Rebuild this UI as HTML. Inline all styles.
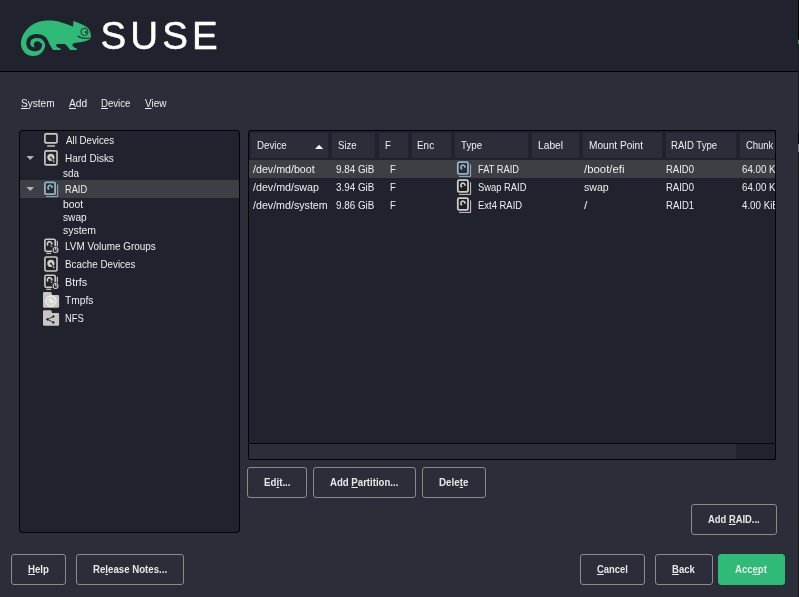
<!DOCTYPE html>
<html lang="en">
<head>
<meta charset="utf-8">
<title>YaST Partitioner - RAID</title>
<style>
html,body{margin:0;padding:0}
body{width:799px;height:597px;overflow:hidden;background:#2b2d38;position:relative;font:11px/13px 'Liberation Sans',sans-serif;color:#efefef}
.abs{position:absolute}
#hdr{left:0;top:0;width:799px;height:71px;background:#20232d}
#hline{left:0;top:71px;width:799px;height:1px;background:#000}
#edge{left:798px;top:0;width:1px;height:597px;background:#1b1b1e}
#edge i{position:absolute;left:0;width:1px;display:block}
.panel{background:#20232d;border:1px solid #030305;border-radius:3px;box-sizing:border-box}
#tree{left:19px;top:130px;width:221px;height:403px}
#tbl{left:248px;top:130px;width:528px;height:330px;overflow:hidden;border-radius:3px 0 0 2px}
.sel{background:#3e3f44}
.hc{position:absolute;top:2px;height:25px;background:#2b2d38}
.t{position:absolute;white-space:nowrap;transform-origin:0 0;color:#efefef;font:11px/13px 'Liberation Sans',sans-serif}
.t.b{font-weight:bold;color:#e8e8e8}
.btn{position:absolute;box-sizing:border-box;height:31px;border:1px solid #8d8a88;border-radius:3px;background:#2b2d38}
.btn.ok{background:#30ba78;border-color:#30ba78}
svg{position:absolute;left:0;top:0;overflow:visible}
</style>
</head>
<body>
<div id="hdr" class="abs"></div>
<div id="hline" class="abs"></div>

<!-- logo -->
<svg width="240" height="71" viewBox="0 0 240 71" style="will-change:transform">
  <g fill="#30ba78">
    <path d="M21.0,43.8 C21.0,38 23.6,32.3 28.6,27.7 C32.6,23.9 39,20.6 47,20.5 C55,20.2 63,22.1 73,26.8 L73.5,21.1 C79,23.2 84.5,25.5 88,28.1 C90,30 91,34 91,37 C91,38.5 90.5,39 89.9,39.3 C87,41.3 82,42.4 75.9,42.7 C74,42.8 73,43.4 72.6,44.2 C72.2,45.5 73,46.6 74,47.2 L76.5,48.4 L77.2,50 L70.2,50 C69,48.5 67.5,46.5 66.4,45.3 C65.5,44.4 65,44 64.4,44 L57.5,44 C56.5,44 56,44.5 56.2,45.2 C56.4,46 56.8,46.8 57.3,47.2 L60.3,48.4 L60.9,50 L53,50 C51,48 49.5,45.5 47.9,41.7 L33,44 Z"/>
    <circle cx="33.2" cy="43.8" r="12.2"/>
  </g>
  <path d="M50.8,50.5 C49.6,48.2 48.4,46.4 47.4,44.6 C46.7,43 46.4,42 45.6,40.6 C45,39.6 44.3,38.8 43.5,38 C42.5,37.2 41.4,36.7 40.1,36.4 C38.5,36 37,35.9 35.6,36.0 C34,36.2 32.5,36.6 31.1,37.5 C29.8,38.4 29,39.6 28.55,41.1 C28.2,42 28.2,43 28.3,44.1 C28.5,45.4 29,46.4 29.8,47.3 C30.7,48.3 31.8,48.8 33.1,49.1 C34.3,49.3 35.5,49.3 36.6,49.1 C37.8,48.8 38.8,48.2 39.4,47.3 C39.9,46.6 40.1,45.9 40.1,45.1" fill="none" stroke="#20232d" stroke-width="4" stroke-linecap="round"/>
  <circle cx="37.4" cy="44.7" r="3.5" fill="#20232d"/>
  <circle cx="84.5" cy="31.9" r="3.6" fill="none" stroke="#20232d" stroke-width="0.9"/>
  <circle cx="86.0" cy="32.2" r="1.1" fill="#20232d"/>
  <path d="M78.1,36.2 Q81.5,38.9 90.3,38" fill="none" stroke="#20232d" stroke-width="1.1" stroke-linecap="round"/>
  <text transform="scale(0.975,1)" x="103.1 133.6 166.45 197.0" y="49.4" font-family="'Liberation Sans', sans-serif" font-size="39.5" fill="#ffffff" stroke="#ffffff" stroke-width="0.5" stroke-linejoin="round">SUSE</text>
</svg>

<!-- tree panel -->
<div id="tree" class="abs panel">
  <div class="abs sel" style="left:0;top:49px;width:219px;height:18px"></div>
</div>

<!-- table panel -->
<div id="tbl" class="abs panel">
  <div class="hc" style="left:2px;width:77px"></div>
  <div class="hc" style="left:83px;width:43px"></div>
  <div class="hc" style="left:130px;width:29px"></div>
  <div class="hc" style="left:163px;width:39px"></div>
  <div class="hc" style="left:206px;width:73px"></div>
  <div class="hc" style="left:283px;width:47px"></div>
  <div class="hc" style="left:334px;width:79px"></div>
  <div class="hc" style="left:417px;width:70px"></div>
  <div class="hc" style="left:491px;width:40px"></div>
  <div class="abs sel" style="left:0;top:29px;width:526px;height:18px"></div>
  <div class="abs" style="left:0;top:312px;width:526px;height:1px;background:#07080b"></div>
  <div class="abs" style="left:0;top:313px;width:487px;height:15px;background:#2b2d38"></div>
</div>

<!-- icons -->
<svg width="799" height="597" viewBox="0 0 799 597">
  <g color="#cfcac3">
    <!-- All devices: monitor -->
    <rect x="44.9" y="133.9" width="12.1" height="9" rx="1" fill="none" stroke="currentColor" stroke-width="1.6"/>
    <rect x="47.2" y="145.3" width="7.8" height="1.4" fill="currentColor"/>
    <g transform="translate(44.1,150.1)"><rect x="0.8" y="0.8" width="12.1" height="14" rx="1.4" fill="none" stroke="currentColor" stroke-width="1.6"/>
      <circle cx="6.8" cy="7.2" r="3.6" fill="currentColor"/>
      <circle cx="6.8" cy="7.2" r="0.9" fill="#20232d"/>
      <path d="M6.8,7.2 L9.3,10.6" stroke="#20232d" stroke-width="1.2"/>
      <path d="M9.2,10.5 L10.1,12" stroke="currentColor" stroke-width="1.3"/></g>
    <g transform="translate(44.1,238.4)"><rect x="0.8" y="0.8" width="10.3" height="12" rx="1.4" fill="none" stroke="currentColor" stroke-width="1.6"/>
      <path d="M13.2,2.4 V9.2" fill="none" stroke="currentColor" stroke-width="1.2"/>
      <path d="M2.2,14.9 H7.1" fill="none" stroke="currentColor" stroke-width="1.2"/>
      <path d="M3.9,7.3 A2.3,2.3 0 1 1 7.7,6.2" fill="none" stroke="currentColor" stroke-width="1.7"/>
      <path d="M6.6,6.9 L8.1,8.9" stroke="currentColor" stroke-width="1"/>
      <circle cx="11.45" cy="11.6" r="3.7" fill="#20232d"/>
      <circle cx="11.45" cy="11.6" r="2.45" fill="none" stroke="currentColor" stroke-width="1.1"/>
      <path d="M11.45,9.6 V11.6 H13.3" fill="none" stroke="currentColor" stroke-width="0.9"/></g>
    <g transform="translate(44.1,256.2)"><rect x="0.8" y="0.8" width="12.1" height="14" rx="1.4" fill="none" stroke="currentColor" stroke-width="1.6"/>
      <circle cx="6.8" cy="7.2" r="3.6" fill="currentColor"/>
      <circle cx="6.8" cy="7.2" r="0.9" fill="#20232d"/>
      <path d="M6.8,7.2 L9.3,10.6" stroke="#20232d" stroke-width="1.2"/>
      <path d="M9.2,10.5 L10.1,12" stroke="currentColor" stroke-width="1.3"/></g>
    <g transform="translate(44.1,274.4)"><rect x="0.8" y="0.8" width="10.3" height="12" rx="1.4" fill="none" stroke="currentColor" stroke-width="1.6"/>
      <path d="M13.2,2.4 V9.2" fill="none" stroke="currentColor" stroke-width="1.2"/>
      <path d="M2.2,14.9 H7.1" fill="none" stroke="currentColor" stroke-width="1.2"/>
      <path d="M3.9,7.3 A2.3,2.3 0 1 1 7.7,6.2" fill="none" stroke="currentColor" stroke-width="1.7"/>
      <path d="M6.6,6.9 L8.1,8.9" stroke="currentColor" stroke-width="1"/>
      <circle cx="11.45" cy="11.6" r="3.7" fill="#20232d"/>
      <circle cx="11.45" cy="11.6" r="2.45" fill="none" stroke="currentColor" stroke-width="1.1"/>
      <path d="M11.45,9.6 V11.6 H13.3" fill="none" stroke="currentColor" stroke-width="0.9"/></g>
    <g transform="translate(43.0,292.1)" color="#c9c6c1"><path d="M0,1.3 Q0,0 1.3,0 H7.3 Q8.5,0 8.7,1.2 L9,2.9 H14.9 Q16.1,2.9 16.1,4.1 V14.4 Q16.1,15.6 14.9,15.6 H1.3 Q0,15.6 0,14.4 Z" fill="currentColor"/></g>
    <circle cx="50.9" cy="301.1" r="5.3" fill="#d6d4d0" stroke="#fafafa" stroke-width="0.9"/>
    <path d="M49.6,298.4 L50.6,301.9 H54.1" fill="none" stroke="#fafafa" stroke-width="1.3" stroke-linejoin="round"/>
    <g transform="translate(43.0,310.2)" color="#c9c6c1"><path d="M0,1.3 Q0,0 1.3,0 H7.3 Q8.5,0 8.7,1.2 L9,2.9 H14.9 Q16.1,2.9 16.1,4.1 V14.4 Q16.1,15.6 14.9,15.6 H1.3 Q0,15.6 0,14.4 Z" fill="currentColor"/></g>
    <g fill="#20232d" stroke="#20232d" stroke-width="0.9">
      <path d="M53.4,316.5 L47.4,319.4 L53.4,322.5" fill="none"/>
      <circle cx="53.4" cy="316.5" r="0.8"/>
      <circle cx="47.4" cy="319.4" r="0.8"/>
      <circle cx="53.4" cy="322.5" r="0.8"/>
    </g>
    <g transform="translate(456.9,179.2)"><rect x="0.9" y="0.9" width="10.2" height="11.8" rx="1.3" fill="#1c1d24" fill-opacity="0.55" stroke="currentColor" stroke-width="1.8"/>
      <path d="M13.7,3.1 V15.2 H2.1" fill="none" stroke="currentColor" stroke-width="1"/>
      <path d="M5.32,7.83 A2,2 0 1 1 7.93,6.47" fill="none" stroke="currentColor" stroke-width="1.6"/></g>
    <g transform="translate(456.9,197.2)"><rect x="0.9" y="0.9" width="10.2" height="11.8" rx="1.3" fill="#1c1d24" fill-opacity="0.55" stroke="currentColor" stroke-width="1.8"/>
      <path d="M13.7,3.1 V15.2 H2.1" fill="none" stroke="currentColor" stroke-width="1"/>
      <path d="M5.32,7.83 A2,2 0 1 1 7.93,6.47" fill="none" stroke="currentColor" stroke-width="1.6"/></g>
  </g>
  <g color="#8fb3c9">
    <g transform="translate(44.0,181.5)"><rect x="0.9" y="0.9" width="10.2" height="11.8" rx="1.3" fill="#1c1d24" fill-opacity="0.55" stroke="currentColor" stroke-width="1.8"/>
      <path d="M13.7,3.1 V15.2 H2.1" fill="none" stroke="currentColor" stroke-width="1"/>
      <path d="M5.32,7.83 A2,2 0 1 1 7.93,6.47" fill="none" stroke="currentColor" stroke-width="1.6"/></g>
    <g transform="translate(456.9,161.2)"><rect x="0.9" y="0.9" width="10.2" height="11.8" rx="1.3" fill="#1c1d24" fill-opacity="0.55" stroke="currentColor" stroke-width="1.8"/>
      <path d="M13.7,3.1 V15.2 H2.1" fill="none" stroke="currentColor" stroke-width="1"/>
      <path d="M5.32,7.83 A2,2 0 1 1 7.93,6.47" fill="none" stroke="currentColor" stroke-width="1.6"/></g>
  </g>
  <!-- expand arrows -->
  <path d="M26.4,156 H34 L30.2,160 Z" fill="#b4b4b4"/>
  <path d="M26.4,187 H34 L30.2,191 Z" fill="#b4b4b4"/>
  <!-- sort arrow -->
  <path d="M315,149.1 H323.2 L319.1,144.7 Z" fill="#f8f8f8"/>
</svg>

<!-- buttons -->
<div class="btn" style="left:247px;top:467px;width:60px"></div>
<div class="btn" style="left:313px;top:467px;width:103px"></div>
<div class="btn" style="left:422px;top:467px;width:64px"></div>
<div class="btn" style="left:691px;top:504px;width:86px"></div>
<div class="btn" style="left:11px;top:554px;width:55px"></div>
<div class="btn" style="left:76px;top:554px;width:108px"></div>
<div class="btn" style="left:580px;top:554px;width:65px"></div>
<div class="btn" style="left:655px;top:554px;width:58px"></div>
<div class="btn ok" style="left:718px;top:554px;width:67px"></div>

<div id="clip" style="position:absolute;left:249px;top:131px;width:526px;height:312px;overflow:hidden;will-change:transform">
  <span class="t" style="left:497.2px;top:8px;transform:scaleX(0.86)">Chunk Size</span>
  <span class="t" style="left:492.5px;top:32px;transform:scaleX(0.885)">64.00 KiB</span>
  <span class="t" style="left:492.5px;top:50px;transform:scaleX(0.885)">64.00 KiB</span>
  <span class="t" style="left:492.5px;top:68px;transform:scaleX(0.885)">4.00 KiB</span>
</div>
<div id="txt" style="position:absolute;left:0;top:0;width:799px;height:597px;will-change:transform">
<span class="t" style="left:21.00px;top:97px;transform:scaleX(0.9167)"><u>S</u>ystem</span>
<span class="t" style="left:69.00px;top:97px;transform:scaleX(0.9333)"><u>A</u>dd</span>
<span class="t" style="left:101.20px;top:97px;transform:scaleX(0.8722)"><u>D</u>evice</span>
<span class="t" style="left:145.00px;top:97px;transform:scaleX(0.9095)"><u>V</u>iew</span>
<span class="t" style="left:65.50px;top:134px;transform:scaleX(0.8833)">All Devices</span>
<span class="t" style="left:64.59px;top:152px;transform:scaleX(0.9086)">Hard Disks</span>
<span class="t" style="left:63.05px;top:167px;transform:scaleX(0.8986)">sda</span>
<span class="t" style="left:64.66px;top:183px;transform:scaleX(0.8404)">RAID</span>
<span class="t" style="left:62.80px;top:198px;transform:scaleX(0.9398)">boot</span>
<span class="t" style="left:63.04px;top:211px;transform:scaleX(0.9212)">swap</span>
<span class="t" style="left:63.03px;top:224px;transform:scaleX(0.9481)">system</span>
<span class="t" style="left:64.60px;top:240px;transform:scaleX(0.9008)">LVM Volume Groups</span>
<span class="t" style="left:64.61px;top:258px;transform:scaleX(0.8916)">Bcache Devices</span>
<span class="t" style="left:64.52px;top:276px;transform:scaleX(0.9788)">Btrfs</span>
<span class="t" style="left:65.27px;top:294px;transform:scaleX(0.9267)">Tmpfs</span>
<span class="t" style="left:64.65px;top:312px;transform:scaleX(0.8537)">NFS</span>
<span class="t" style="left:256.62px;top:139px;transform:scaleX(0.8837)">Device</span>
<span class="t" style="left:337.66px;top:139px;transform:scaleX(0.8732)">Size</span>
<span class="t" style="left:384.52px;top:139px;transform:scaleX(0.8762)">F</span>
<span class="t" style="left:417.10px;top:139px;transform:scaleX(0.9014)">Enc</span>
<span class="t" style="left:461.18px;top:139px;transform:scaleX(0.8860)">Type</span>
<span class="t" style="left:537.57px;top:139px;transform:scaleX(0.9307)">Label</span>
<span class="t" style="left:588.88px;top:139px;transform:scaleX(0.9212)">Mount Point</span>
<span class="t" style="left:671.33px;top:139px;transform:scaleX(0.8699)">RAID Type</span>
<span class="t" style="left:252.50px;top:163px;transform:scaleX(0.9701)">/dev/md/boot</span>
<span class="t" style="left:335.95px;top:163px;transform:scaleX(0.8958)">9.84 GiB</span>
<span class="t" style="left:389.84px;top:163px;transform:scaleX(0.8571)">F</span>
<span class="t" style="left:477.65px;top:163px;transform:scaleX(0.8468)">FAT RAID</span>
<span class="t" style="left:584.20px;top:163px;transform:scaleX(1.0338)">/boot/efi</span>
<span class="t" style="left:666.44px;top:163px;transform:scaleX(0.8613)">RAID0</span>
<span class="t" style="left:252.50px;top:181px;transform:scaleX(0.9719)">/dev/md/swap</span>
<span class="t" style="left:335.95px;top:181px;transform:scaleX(0.8958)">3.94 GiB</span>
<span class="t" style="left:389.84px;top:181px;transform:scaleX(0.8571)">F</span>
<span class="t" style="left:478.07px;top:181px;transform:scaleX(0.8518)">Swap RAID</span>
<span class="t" style="left:583.72px;top:181px;transform:scaleX(0.9616)">swap</span>
<span class="t" style="left:666.44px;top:181px;transform:scaleX(0.8613)">RAID0</span>
<span class="t" style="left:252.50px;top:199px;transform:scaleX(0.9692)">/dev/md/system</span>
<span class="t" style="left:335.95px;top:199px;transform:scaleX(0.8958)">9.86 GiB</span>
<span class="t" style="left:389.84px;top:199px;transform:scaleX(0.8571)">F</span>
<span class="t" style="left:477.64px;top:199px;transform:scaleX(0.8583)">Ext4 RAID</span>
<span class="t" style="left:584.20px;top:199px;transform:scaleX(1.1000)">/</span>
<span class="t" style="left:666.43px;top:199px;transform:scaleX(0.8683)">RAID1</span>
<span class="t b" style="left:263.54px;top:476px;transform:scaleX(0.8842)">Ed<u>i</u>t...</span>
<span class="t b" style="left:330.28px;top:476px;transform:scaleX(0.8738)">Add <u>P</u>artition...</span>
<span class="t b" style="left:438.83px;top:476px;transform:scaleX(0.8906)">Dele<u>t</u>e</span>
<span class="t b" style="left:708.19px;top:513px;transform:scaleX(0.8538)">Add <u>R</u>AID...</span>
<span class="t b" style="left:28.00px;top:563px;transform:scaleX(0.8766)"><u>H</u>elp</span>
<span class="t b" style="left:93.04px;top:563px;transform:scaleX(0.8783)">Re<u>l</u>ease Notes...</span>
<span class="t b" style="left:597.20px;top:563px;transform:scaleX(0.8539)"><u>C</u>ancel</span>
<span class="t b" style="left:672.30px;top:563px;transform:scaleX(0.8648)"><u>B</u>ack</span>
<span class="t b" style="left:735.48px;top:563px;transform:scaleX(0.8690)">Acc<u>e</u>pt</span>
</div>
<div id="edge" class="abs"><i style="top:0;height:40px;background:#000"></i><i style="top:40px;height:4px;background:#3f9b3c"></i><i style="top:133px;height:11px;background:#000"></i><i style="top:144px;height:8px;background:#777"></i></div>
</body>
</html>
